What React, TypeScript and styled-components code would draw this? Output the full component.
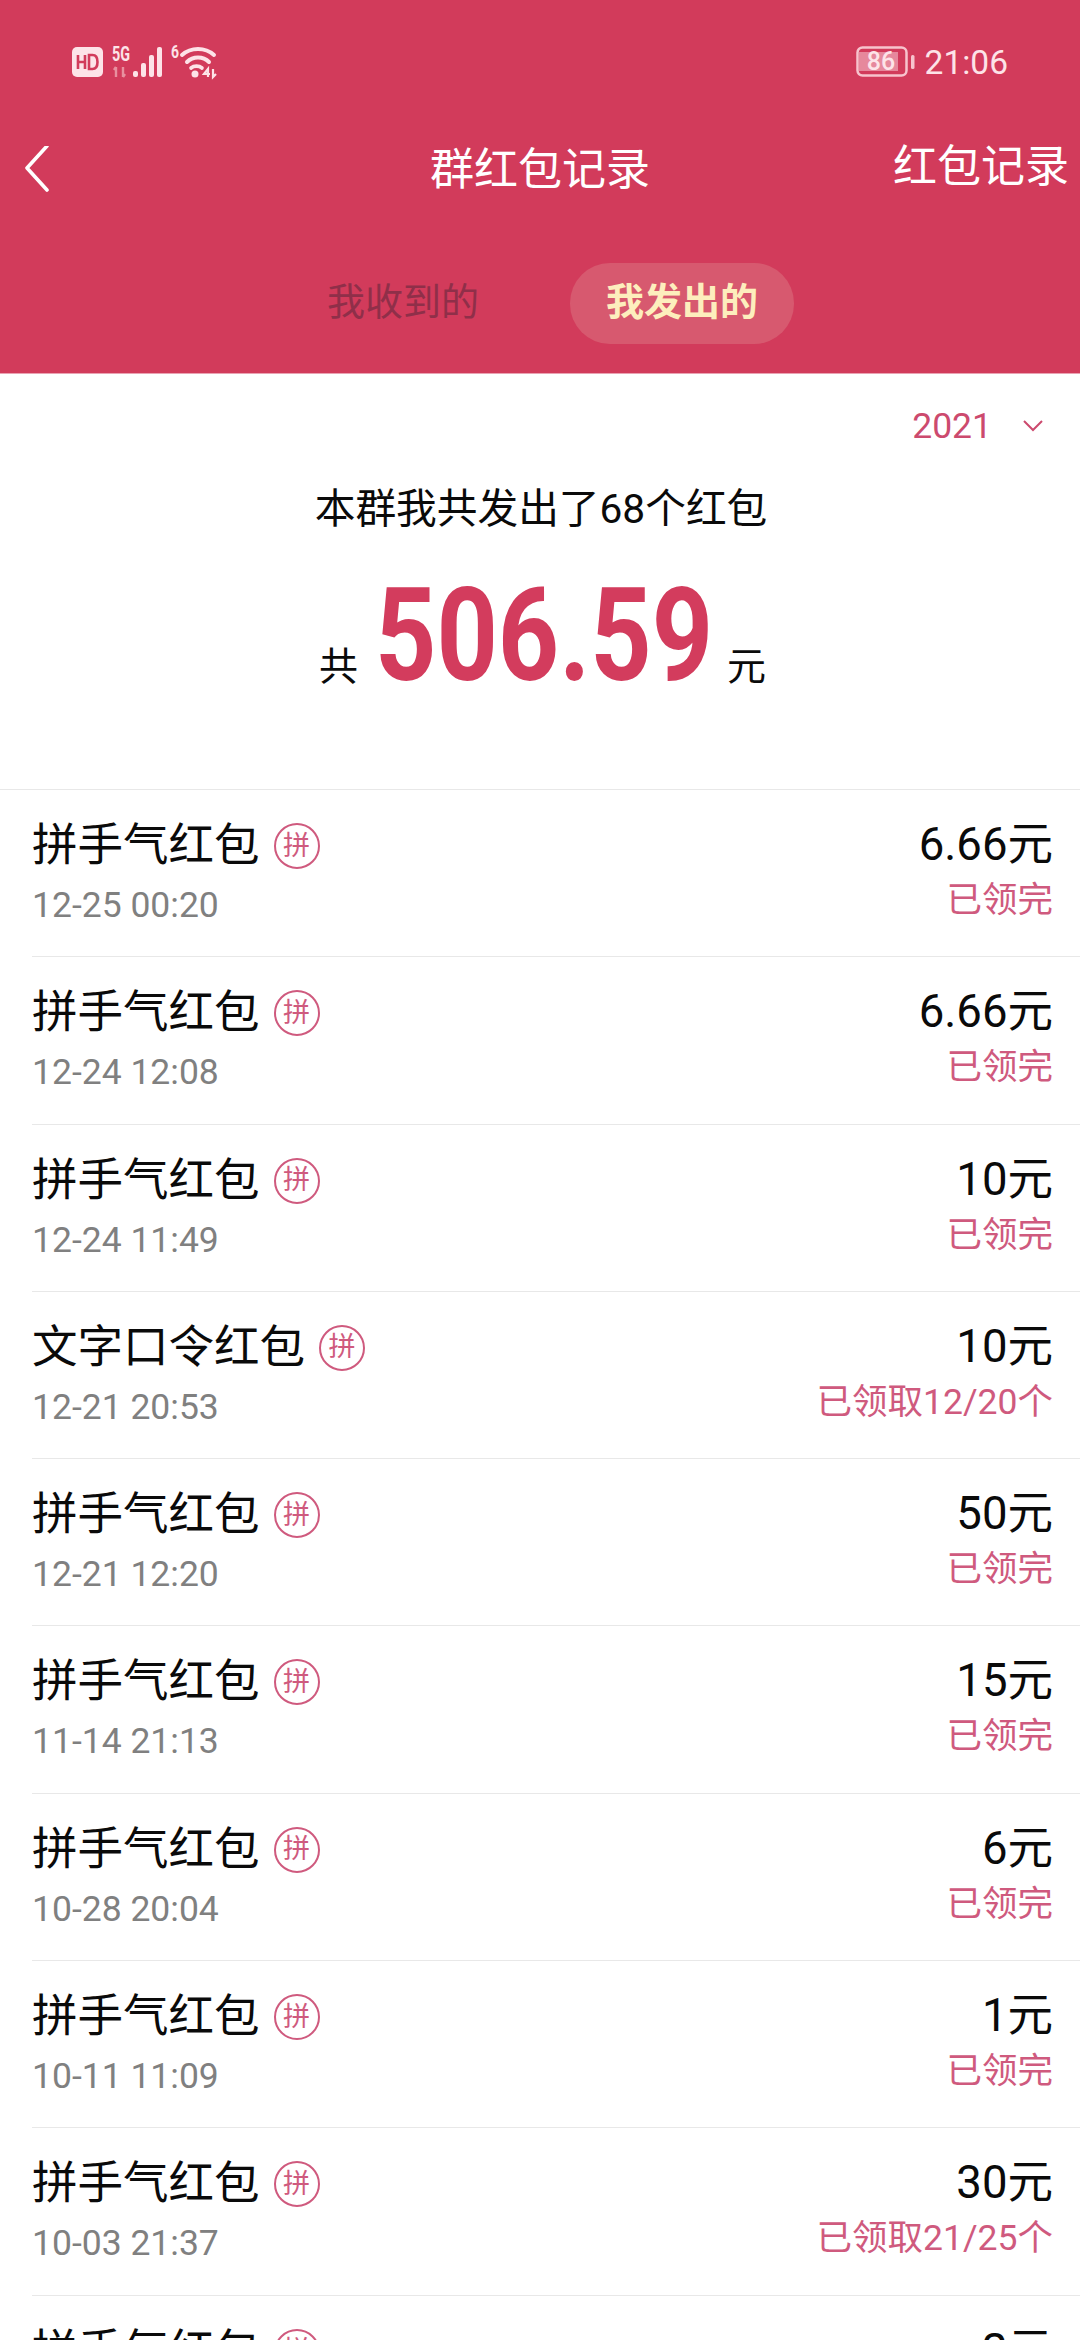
import { createGlobalStyle } from "styled-components";
import styled from "styled-components";

const GlobalStyle = createGlobalStyle`
    html, body {
        margin: 0;
        padding: 0;
        background: #ffffff;
    }
    body {
        font-family: Roboto, "Noto Sans CJK SC", sans-serif;
    }
`;

const Page = styled.div`
    width: 1080px;
    height: 2340px;
    overflow: hidden;
    background: #ffffff;
`;

const Header = styled.header`
    height: 374px;
    box-sizing: border-box;
    background: #d23b5b;
    border-bottom: 1px solid #eaa3b3;
    display: flex;
    flex-direction: column;
`;

const StatusBar = styled.div`
    height: 62px;
    margin-top: 31px;
    padding: 0 72px;
    display: flex;
    align-items: center;
    justify-content: space-between;
    color: #fde3e8;
`;

const StatusGroup = styled.div`
    display: flex;
    align-items: center;
    gap: 9px;
`;

const Clock = styled.span`
    font-size: 33.5px;
    margin-left: 1px;
`;

const NavBar = styled.div`
    height: 70px;
    margin-top: 42px;
    padding: 0 11px 0 24px;
    display: grid;
    grid-template-columns: 406px auto 1fr;
    align-items: center;
    color: #ffffff;
`;

const NavTitle = styled.div`
    font-size: 44px;
    line-height: 70px;
`;

const NavLink = styled.div`
    font-size: 44px;
    line-height: 64px;
    text-align: right;
    padding-bottom: 6px;
`;

const Tabs = styled.div`
    margin-top: 58px;
    padding-left: 327px;
    display: flex;
    align-items: center;
    gap: 91px;
`;

const Tab = styled.div<{ $active?: boolean }>`
    font-size: 38px;
    font-weight: ${(p) => (p.$active ? 700 : 400)};
    color: ${(p) => (p.$active ? "#fdeebd" : "#8f2f49")};
    height: 81px;
    line-height: 78px;
    padding: 0 ${(p) => (p.$active ? "36px" : "0")};
    border-radius: 40px;
    background: ${(p) => (p.$active ? "#d7596f" : "transparent")};
`;

const Summary = styled.section`
    height: 416px;
    display: flex;
    flex-direction: column;
    border-bottom: 1px solid #e8e8e8;
    box-sizing: border-box;
`;

const YearRow = styled.div`
    margin-top: 31px;
    padding-right: 37px;
    display: flex;
    justify-content: flex-end;
    align-items: center;
    gap: 31px;
    font-size: 35.5px;
    line-height: 42px;
    color: #cc4a6e;
`;

const SummaryText = styled.div`
    margin-top: 31px;
    padding-left: 2px;
    text-align: center;
    font-size: 40.7px;
    line-height: 62px;
    color: #0a0a0a;
`;

const TotalRow = styled.div`
    margin-top: 29px;
    padding-left: 5px;
    display: flex;
    justify-content: center;
    align-items: baseline;
    gap: 17px;
    color: #0a0a0a;
    font-size: 39px;
`;

const TotalAmount = styled.span`
    display: inline-block;
    width: 335px;
    font-size: 129px;
    line-height: 134px;
    font-weight: 700;
    color: #d33c5d;
    white-space: nowrap;
    transform: scaleX(0.83);
    transform-origin: left center;
`;

const List = styled.div`
    display: flex;
    flex-direction: column;
`;

const Row = styled.div`
    height: 167.3px;
    box-sizing: border-box;
    margin-left: 32px;
    padding: 25px 27px 0 0;
    display: flex;
    justify-content: space-between;
    border-bottom: 1px solid #e8e8e8;
`;

const RowColumn = styled.div<{ $right?: boolean }>`
    display: flex;
    flex-direction: column;
    align-items: ${(p) => (p.$right ? "flex-end" : "flex-start")};
`;

const RowTitle = styled.div`
    display: flex;
    align-items: center;
    gap: 14px;
    font-size: 45.5px;
    line-height: 62px;
    color: #0a0a0a;
`;

const Badge = styled.span`
    width: 46px;
    height: 46px;
    box-sizing: border-box;
    border: 2px solid #cf5a7e;
    border-radius: 50%;
    display: flex;
    align-items: center;
    justify-content: center;
    font-size: 27px;
    line-height: 1;
    color: #cf5a7e;
`;

const RowDate = styled.div`
    margin-top: 3px;
    font-size: 35.5px;
    line-height: 50px;
    color: #808080;
`;

const RowAmount = styled.div`
    margin-top: -1px;
    font-size: 45.5px;
    line-height: 62px;
    color: #0a0a0a;
`;

const RowStatus = styled.div`
    margin-top: -1px;
    font-size: 35.5px;
    line-height: 50px;
    color: #cf5a7e;
`;

const records = [
    { title: "拼手气红包", date: "12-25 00:20", amount: "6.66元", status: "已领完" },
    { title: "拼手气红包", date: "12-24 12:08", amount: "6.66元", status: "已领完" },
    { title: "拼手气红包", date: "12-24 11:49", amount: "10元", status: "已领完" },
    { title: "文字口令红包", date: "12-21 20:53", amount: "10元", status: "已领取12/20个" },
    { title: "拼手气红包", date: "12-21 12:20", amount: "50元", status: "已领完" },
    { title: "拼手气红包", date: "11-14 21:13", amount: "15元", status: "已领完" },
    { title: "拼手气红包", date: "10-28 20:04", amount: "6元", status: "已领完" },
    { title: "拼手气红包", date: "10-11 11:09", amount: "1元", status: "已领完" },
    { title: "拼手气红包", date: "10-03 21:37", amount: "30元", status: "已领取21/25个" },
    { title: "拼手气红包", date: "10-02 20:11", amount: "2元", status: "已领完" },
];

function HdIcon() {
    return (
        <svg width="31" height="30" viewBox="0 0 31 30">
            <rect width="31" height="30" rx="5" fill="#fde3e8" />
            <path d="M6 8v14M6 15h7M13 8v14" stroke="#d23b5b" strokeWidth="2.6" fill="none" />
            <path d="M17 8v14h3.5c3.5 0 5-3 5-7s-1.5-7-5-7z" stroke="#d23b5b" strokeWidth="2.6" fill="none" />
        </svg>
    );
}

function SignalIcon() {
    return (
        <svg width="50" height="32" viewBox="0 0 50 32" overflow="visible">
            <text x="0" y="15" fontSize="20" fontWeight="700" fill="#fde3e8" fontFamily="Roboto, sans-serif" textLength="18" lengthAdjust="spacingAndGlyphs">5G</text>
            <path d="M4 21v10M2 24l2-3M11 21v10M11 31l2-3" stroke="#e8909f" strokeWidth="2.4" fill="none" />
            <rect x="21" y="25" width="5" height="6" rx="2" fill="#fde3e8" />
            <rect x="29" y="17" width="5" height="14" rx="2" fill="#fde3e8" />
            <rect x="37" y="9" width="5" height="22" rx="2" fill="#fde3e8" />
            <rect x="45" y="1" width="5" height="30" rx="2" fill="#fde3e8" />
        </svg>
    );
}

function WifiIcon() {
    return (
        <svg width="46" height="34" viewBox="0 0 46 34" overflow="visible">
            <text x="0" y="13" fontSize="18" fontWeight="700" fill="#fde3e8" fontFamily="Roboto, sans-serif" textLength="8" lengthAdjust="spacingAndGlyphs">6</text>
            <path d="M11 10c9-8 23-8 32 0" stroke="#fde3e8" strokeWidth="4" fill="none" strokeLinecap="round" />
            <path d="M16 17c6-6 16-6 22 0" stroke="#fde3e8" strokeWidth="4" fill="none" strokeLinecap="round" />
            <path d="M20 23c3-2.500 8-2.500 11 0" stroke="#fde3e8" strokeWidth="3.6" fill="none" strokeLinecap="round" />
            <circle cx="24" cy="29" r="3.500" fill="#fde3e8" />
            <path d="M37 32v-8l-4 5h6M42 24v8l3-3" stroke="#fde3e8" strokeWidth="2.2" fill="none" />
        </svg>
    );
}

function BatteryIcon() {
    return (
        <svg width="59" height="32" viewBox="0 0 59 32">
            <rect x="1.5" y="1.5" width="49" height="28" rx="5" fill="none" stroke="#f7c3cd" strokeWidth="2.5" />
            <rect x="3" y="6" width="39" height="19" fill="#e6889c" />
            <rect x="55" y="9" width="3.5" height="14" rx="1.5" fill="#f7c3cd" />
            <text x="25" y="24" fontSize="25" fontWeight="500" fill="#fde3e8" textAnchor="middle" fontFamily="Roboto, sans-serif">86</text>
        </svg>
    );
}

function BackIcon() {
    return (
        <svg width="26" height="48" viewBox="0 2 26 48">
            <path d="M23 2L3 24l20 22" fill="none" stroke="#ffffff" strokeWidth="3.6" strokeLinecap="round" strokeLinejoin="round" />
        </svg>
    );
}

function ChevronIcon() {
    return (
        <svg width="20" height="12" viewBox="0 0 20 12">
            <path d="M1 1l9 9 9-9" fill="none" stroke="#cc4a6e" strokeWidth="2" />
        </svg>
    );
}

export default function App() {
    return (
        <Page>
            <GlobalStyle />
            <Header>
                <StatusBar>
                    <StatusGroup>
                        <HdIcon />
                        <SignalIcon />
                        <WifiIcon />
                    </StatusGroup>
                    <StatusGroup>
                        <BatteryIcon />
                        <Clock>21:06</Clock>
                    </StatusGroup>
                </StatusBar>
                <NavBar>
                    <BackIcon />
                    <NavTitle>群红包记录</NavTitle>
                    <NavLink>红包记录</NavLink>
                </NavBar>
                <Tabs>
                    <Tab>我收到的</Tab>
                    <Tab $active>我发出的</Tab>
                </Tabs>
            </Header>
            <Summary>
                <YearRow>
                    <span>2021</span>
                    <ChevronIcon />
                </YearRow>
                <SummaryText>本群我共发出了68个红包</SummaryText>
                <TotalRow>
                    <span>共</span>
                    <TotalAmount>506.59</TotalAmount>
                    <span>元</span>
                </TotalRow>
            </Summary>
            <List>
                {records.map((r) => (
                    <Row key={r.date}>
                        <RowColumn>
                            <RowTitle>
                                {r.title}
                                <Badge>拼</Badge>
                            </RowTitle>
                            <RowDate>{r.date}</RowDate>
                        </RowColumn>
                        <RowColumn $right>
                            <RowAmount>{r.amount}</RowAmount>
                            <RowStatus>{r.status}</RowStatus>
                        </RowColumn>
                    </Row>
                ))}
            </List>
        </Page>
    );
}
